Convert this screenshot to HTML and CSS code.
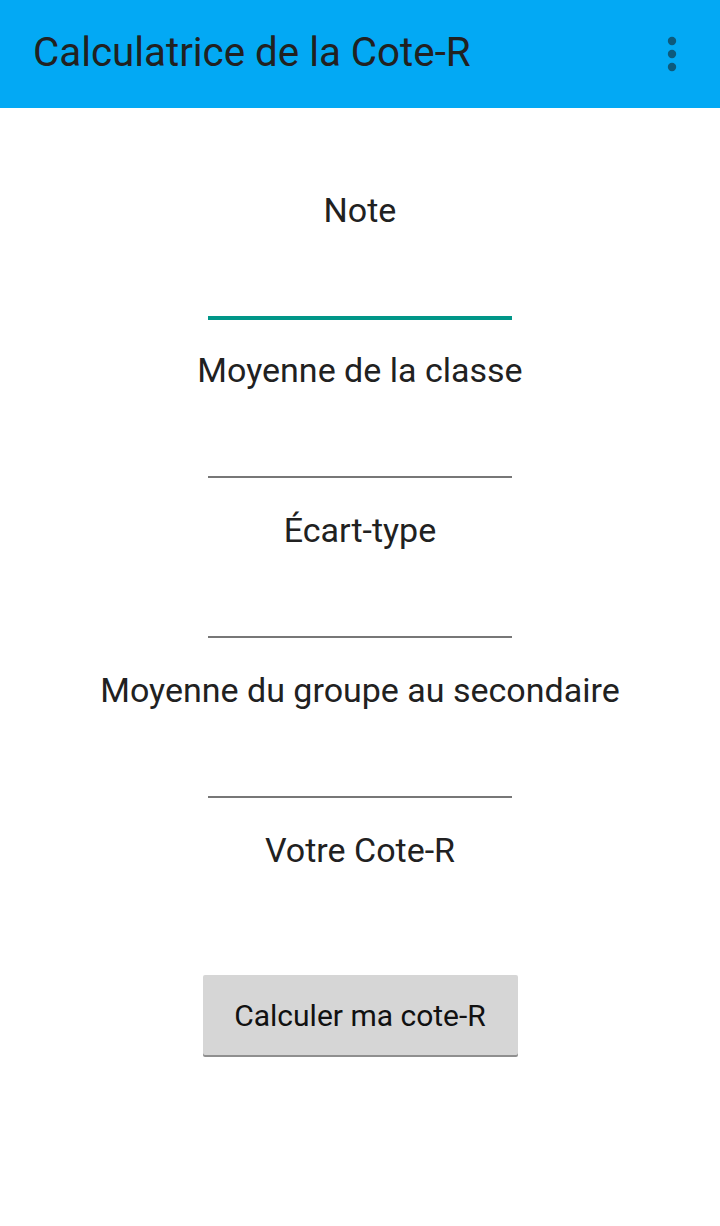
FILE: index.html
```html
<!DOCTYPE html>
<html lang="fr">
<head>
<meta charset="utf-8">
<title>Calculatrice de la Cote-R</title>
<link rel="stylesheet" href="styles.css">
</head>
<body>
<header class="appbar">
  <h1 class="appbar-title">Calculatrice de la Cote-R</h1>
  <button class="overflow" aria-label="Plus d'options">
    <svg width="12" height="36" viewBox="0 0 12 36"><circle cx="6" cy="5" r="4.2"/><circle cx="6" cy="18" r="4.2"/><circle cx="6" cy="31" r="4.2"/></svg>
  </button>
</header>
<main class="form">
  <div class="field">
    <label class="field-label">Note</label>
    <div class="field-input focused"></div>
  </div>
  <div class="field">
    <label class="field-label">Moyenne de la classe</label>
    <div class="field-input"></div>
  </div>
  <div class="field">
    <label class="field-label">Écart-type</label>
    <div class="field-input"></div>
  </div>
  <div class="field">
    <label class="field-label">Moyenne du groupe au secondaire</label>
    <div class="field-input"></div>
  </div>
  <div class="result">Votre Cote-R</div>
  <button class="calc-btn">Calculer ma cote-R</button>
</main>
</body>
</html>
```
FILE: styles.css
```css
html, body {
  margin: 0;
  padding: 0;
  background: #ffffff;
}
body {
  font-family: Roboto, "Liberation Sans", sans-serif;
  color: #212121;
  width: 720px;
  height: 1226px;
  overflow: hidden;
}
.appbar {
  height: 108px;
  background: #03a9f4;
  display: flex;
  align-items: center;
  padding: 0 33px;
  box-sizing: border-box;
}
.appbar-title {
  flex: 1;
  margin: 0;
  font-size: 40.3px;
  font-weight: 400;
  color: #212121;
  line-height: 1;
  padding-bottom: 2px;
}
.overflow {
  border: 0;
  background: none;
  padding: 0;
  margin-right: 9px;
  display: flex;
  fill: #0d5a7c;
}
.form {
  display: flex;
  flex-direction: column;
  align-items: center;
  padding-top: 77px;
}
.field {
  display: flex;
  flex-direction: column;
  align-items: center;
  margin-bottom: 27px;
}
.field-label, .result {
  height: 50px;
  line-height: 50px;
  font-size: 34px;
  color: #212121;
  text-align: center;
  white-space: nowrap;
}
.field-input {
  width: 304px;
  height: 81px;
  border-bottom: 2px solid #777777;
}
.field-input.focused {
  border-bottom: 4px solid #009688;
  margin-bottom: -2px;
}
.calc-btn {
  margin-top: 100px;
  width: 315px;
  height: 80px;
  border: 0;
  border-radius: 2px;
  background: #d6d6d6;
  box-shadow: 0 2px 0 #8f8f8f;
  font-family: Roboto, "Liberation Sans", sans-serif;
  font-size: 30px;
  color: #111111;
  padding: 0;
}
```
